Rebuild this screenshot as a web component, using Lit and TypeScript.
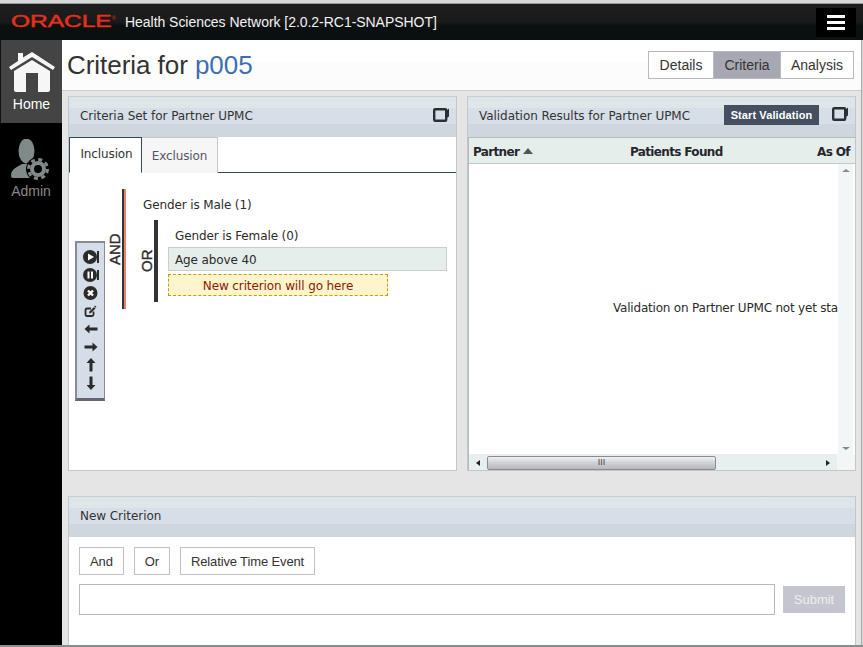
import { LitElement, html, css, svg } from "lit";
import { customElement, state } from "lit/decorators.js";

const windowIcon = html`<svg class="win" width="16" height="14" viewBox="0 0 16 14">
  <rect x="1.200" y="1.200" width="12" height="11.600" rx="1" fill="none" stroke="#2a2f35" stroke-width="2.400" />
  <path d="M13.500 2.500l2.500-2v8l-2.500 1.500z" fill="#2a2f35" />
</svg>`;

const arrow = (d: string) => svg`<path d=${d} fill="#2b2b2b" />`;

const toolIcons = [
  svg`<circle cx="7" cy="7" r="7" fill="#2b2b2b" /><path d="M5 3.500l6 3.500-6 3.500z" fill="#fff" /><path d="M14 1h2v12h-2z" fill="#2b2b2b" />`,
  svg`<circle cx="7" cy="7" r="7" fill="#2b2b2b" /><path d="M4.500 3.500h2v7h-2zM8 3.500h2v7H8z" fill="#fff" /><path d="M14 2h2v10h-2z" fill="#2b2b2b" />`,
  svg`<circle cx="7.500" cy="7" r="7" fill="#2b2b2b" /><path d="M5 4.500l5 5M10 4.500l-5 5" stroke="#fff" stroke-width="2.400" />`,
  svg`<path d="M10.500 7.500v3a1.500 1.500 0 0 1-1.500 1.500H4A1.500 1.500 0 0 1 2.500 10.500V6A1.500 1.500 0 0 1 4 4.500h4" fill="none" stroke="#2b2b2b" stroke-width="1.800" /><path d="M6 9.500l.5-2L11 3l1.500 1.500L8 9z" fill="#2b2b2b" /><path d="M12 1.500l1.500 1.500-.8.8-1.500-1.500z" fill="#2b2b2b" />`,
  arrow("M1.500 7l5-4.500V5.500h8v3h-8V11.500z"),
  arrow("M14.500 7l-5-4.500V5.500h-8v3h8V11.500z"),
  arrow("M8 0l4.500 5H9.500v8.500h-3V5H3.500z"),
  arrow("M8 14l4.500-5H9.500V.5h-3V9H3.500z"),
];

@customElement("app-root")
export class AppRoot extends LitElement {
  @state() view = "Criteria";
  @state() tab = "Inclusion";

  static styles = css`
    :host {
      display: block;
      width: 863px;
      height: 647px;
      overflow: hidden;
      background: #fff;
      font-family: "DejaVu Sans", sans-serif;
      font-size: 12px;
      letter-spacing: -0.05px;
      color: #333;
    }

    .shell {
      display: flex;
      flex-direction: column;
      height: 645px;
      border-bottom: 2px solid #87908f;
      background: #d8d8d8;
    }

    .topbar {
      display: flex;
      align-items: center;
      height: 36px;
      flex: none;
      border-top: 1px solid #999;
      margin-top: 3px;
      padding: 0 7px 0 11px;
      background: linear-gradient(#1e1e1e 0, #1a1a1a 50%, #0a1010 60%, #0a0f0f 100%);
    }

    .logo {
      display: flex;
      width: 114px;
      flex: none;
      color: #e2301c;
    }

    .logo span {
      font: 400 17px/20px "Liberation Sans", sans-serif;
      letter-spacing: 0;
      -webkit-text-stroke: 0.5px #e2301c;
      transform: scaleX(1.44);
      transform-origin: left center;
    }

    .logo small {
      font: 5px/8px "Liberation Sans", sans-serif;
      margin-left: 31px;
      margin-top: 2px;
      align-self: flex-start;
    }

    .product {
      flex: 1;
      font: 14px "Liberation Sans", sans-serif;
      letter-spacing: -0.04px;
      color: #f2f2f2;
    }

    .burger {
      display: flex;
      flex-direction: column;
      justify-content: center;
      gap: 3px;
      width: 40px;
      height: 29px;
      padding: 0 11px;
      box-sizing: border-box;
      background: #000;
    }

    .burger i {
      display: block;
      height: 3px;
      background: #fff;
    }

    .body {
      display: flex;
      flex: 1;
      min-height: 0;
    }

    .side {
      width: 62px;
      flex: none;
      background: #000;
      font: 14px "Liberation Sans", sans-serif;
      letter-spacing: 0;
      text-align: center;
    }

    .side .item {
      display: flex;
      flex-direction: column;
      align-items: center;
    }

    .side .home {
      height: 83px;
      background: #444;
      color: #fff;
      padding-top: 12px;
      box-sizing: border-box;
      border-left: 1px solid #111;
    }

    .side .home span {
      margin-top: 4px;
    }

    .side .admin {
      color: #888;
      padding-top: 16px;
    }

    .side .admin span {
      margin-top: 3px;
    }

    .main {
      flex: 1;
      min-width: 0;
      display: flex;
      flex-direction: column;
      background: #e5e5e5;
      margin-right: 1px;
      border-right: 1px solid #aaa;
    }

    .titlebar {
      display: flex;
      align-items: center;
      justify-content: space-between;
      height: 51px;
      flex: none;
      box-sizing: border-box;
      background: linear-gradient(#fff 44%, #fcfcfc 44%);
      border-bottom: 1px solid #ccc;
      padding: 0 7px 0 5px;
    }

    h1 {
      margin: 0;
      font: 400 26px "Liberation Sans", sans-serif;
      letter-spacing: -0.05px;
      color: #333;
    }

    h1 em {
      font-style: normal;
      color: #3b6eb5;
    }

    .views {
      display: flex;
      border: 1px solid #b8b8c0;
      font: 14px "Liberation Sans", sans-serif;
      letter-spacing: 0;
    }

    .views button {
      height: 26px;
      border: 0;
      padding: 0;
      background: #fff;
      color: #333;
      font: inherit;
    }

    .views button + button {
      border-left: 1px solid #b8b8c0;
    }

    .views button.on {
      background: #a8a8b2;
    }

    .panels {
      display: grid;
      grid-template-columns: 389px 389px;
      gap: 10px;
      padding: 5px 0 0 6px;
      height: 375px;
      flex: none;
    }

    .panel {
      position: relative;
      display: flex;
      flex-direction: column;
      min-width: 0;
      background: #fff;
      box-sizing: border-box;
      border: 1px solid #c4c4cc;
      border-top-color: #c8ccd4;
    }

    .phead {
      display: flex;
      align-items: center;
      justify-content: space-between;
      flex: none;
      height: 40px;
      box-sizing: border-box;
      padding: 0 7px 3px 11px;
      color: #333;
      background: linear-gradient(
        #dce6ea 0, #dfe6e8 11px, #d6dee8 11px, #d6dee8 27px, #ced6de 27px
      );
    }

    .phead .win {
      margin-top: -2px;
    }

    .phead .right {
      display: flex;
      align-items: center;
      gap: 13px;
      margin-top: -1px;
    }

    .start {
      width: 95px;
      height: 20px;
      padding: 0;
      border: 0;
      background: #454f60;
      color: #fff;
      font: 700 11px "Liberation Sans", sans-serif;
      letter-spacing: 0.1px;
    }

    .tabs {
      display: flex;
      height: 36px;
      flex: none;
      box-sizing: border-box;
      border-bottom: 1px solid #2f4c5c;
      letter-spacing: -0.12px;
    }

    .tabs button {
      padding: 0;
      font: inherit;
      letter-spacing: inherit;
      width: 76px;
      height: 36px;
      background: #f6f6f6;
      color: #555566;
      border: 1px solid #c4c8cc;
      border-bottom: 0;
      border-left: 0;
      box-sizing: border-box;
    }

    .tabs button.on {
      width: 73px;
      height: 36px;
      padding: 0 0 3px 2px;
      background: #fff;
      color: #333;
      border: 1px solid #2f4c5c;
      border-bottom: 1px solid #fff;
    }

    .tree {
      padding: 16px 9px 0 38px;
      color: #2b2b2b;
      letter-spacing: -0.12px;
    }

    .group {
      display: flex;
    }

    .op {
      writing-mode: vertical-rl;
      transform: rotate(180deg);
      text-align: center;
      width: 15px;
      flex: none;
      font: 15px/15px "Liberation Sans", sans-serif;
      letter-spacing: 0;
      -webkit-text-stroke: 0.4px #333;
    }

    .members {
      flex: 1;
      min-width: 0;
    }

    .and > .members {
      border-left: 2px solid #333;
      padding: 6px 0 7px 19px;
      box-shadow: inset 2px 0 0 #f07f6c;
    }

    .or {
      margin: 7px 0 0 -4px;
    }

    .or > .members {
      border-left: 4px solid #333;
      padding: 6px 0 6px 10px;
    }

    .leaf {
      height: 18px;
      line-height: 20px;
    }

    .or .leaf {
      padding-left: 7px;
    }

    .or .selected {
      height: 24px;
      line-height: 24px;
      margin-top: 3px;
      padding-left: 6px;
      box-sizing: border-box;
      background: #e6eeec;
      border: 1px solid #ccc;
    }

    .slot {
      width: 220px;
      height: 22px;
      margin-top: 3px;
      box-sizing: border-box;
      line-height: 22px;
      text-align: center;
      color: #8b1a00;
      background: #fff5cc;
      border: 1px dashed #c99a10;
    }

    .tools {
      position: absolute;
      left: 6px;
      top: 144px;
      display: flex;
      flex-direction: column;
      align-items: center;
      gap: 2px;
      width: 30px;
      height: 160px;
      padding-top: 6px;
      box-sizing: border-box;
      background: #d5dde8;
      border: 2px solid #8a8a95;
      border-right-width: 1px;
      border-bottom-width: 3px;
      border-bottom-color: #666672;
    }

    .table {
      flex: 1;
      min-height: 0;
      display: flex;
      flex-direction: column;
      border-top: 1px solid #b4bcc0;
      border-left: 1px solid #b4bcc0;
    }

    .cols {
      display: grid;
      grid-template-columns: 157px 187px 1fr;
      height: 26px;
      padding-top: 2px;
      flex: none;
      box-sizing: border-box;
      align-items: center;
      background: #e6eeec;
      border-bottom: 1px solid #c4c8cc;
      font-weight: 700;
      color: #26262e;
      font-size: 12px;
      letter-spacing: -0.65px;
    }

    .cols span {
      padding-left: 4px;
      white-space: nowrap;
      overflow: hidden;
    }

    .sort {
      display: inline-block;
      margin-left: 4px;
      border: 5px solid transparent;
      border-top: 0;
      border-bottom: 6px solid #555;
      vertical-align: 2px;
    }

    .grid {
      flex: 1;
      min-height: 0;
      display: flex;
    }

    .msg {
      flex: 1;
      min-width: 0;
      display: flex;
      align-items: center;
      padding: 0 0 2px 144px;
      box-sizing: border-box;
      white-space: nowrap;
      overflow: hidden;
      letter-spacing: -0.2px;
      color: #2b2b2b;
      border-bottom: 1px solid #eee;
    }

    .vbar {
      width: 15px;
      flex: none;
      margin-right: 2px;
      display: flex;
      flex-direction: column;
      justify-content: space-between;
      align-items: center;
      padding: 5px 0;
      box-sizing: border-box;
      background: #f2f6f6;
    }

    .up, .down {
      border: 3px solid transparent;
      border-left-width: 4px;
      border-right-width: 4px;
    }

    .up {
      border-top: 0;
      border-bottom-color: #888;
    }

    .down {
      border-bottom: 0;
      border-top-color: #888;
    }

    .hbar {
      display: flex;
      align-items: center;
      height: 15px;
      flex: none;
      background: #e8f0ef;
    }

    .cap {
      width: 18px;
      flex: none;
      display: flex;
      justify-content: center;
    }

    .left, .rt {
      border: 4px solid transparent;
      border-top-width: 3.500px;
      border-bottom-width: 3.500px;
    }

    .left {
      border-left: 0;
      border-right-color: #222;
    }

    .rt {
      border-right: 0;
      border-left-color: #222;
    }

    .thumb {
      width: 229px;
      height: 14px;
      box-sizing: border-box;
      border: 1px solid #8c8c8c;
      border-radius: 2px;
      background: linear-gradient(#eef2f0, #d0d0d4 50%, #b8b8bc);
      font: 9px/11px "Liberation Sans", sans-serif;
      text-align: center;
      color: #444;
    }

    .track {
      flex: 1;
    }

    .corner {
      width: 18px;
      height: 15px;
      flex: none;
      background: #f4f6f6;
    }

    .composer {
      margin: 25px 0 0 6px;
      width: 788px;
      flex: 1;
      border-bottom: 0;
    }

    .form {
      padding: 10px 10px 0 10px;
      font: 13px "Liberation Sans", sans-serif;
      letter-spacing: 0;
    }

    .actions {
      display: flex;
      gap: 10px;
    }

    .actions button {
      height: 28px;
      padding: 0 10px;
      background: #fff;
      border: 1px solid #c0c0c8;
      color: #333;
      font: inherit;
      letter-spacing: -0.13px;
    }

    .entry {
      display: flex;
      align-items: center;
      gap: 8px;
      margin-top: 9px;
    }

    .entry input {
      flex: none;
      width: 696px;
      height: 31px;
      box-sizing: border-box;
      border: 1px solid #b8b8b8;
      padding: 0 6px;
    }

    .entry button {
      width: 62px;
      height: 27px;
      padding: 0;
      border: 0;
      background: #c5c5cf;
      color: #eee;
      font: inherit;
    }
  `;

  views = [
    { name: "Details", width: 64 },
    { name: "Criteria", width: 67 },
    { name: "Analysis", width: 73 },
  ];

  render() {
    return html`
      <div class="shell">
        <header class="topbar">
          <div class="logo"><span>ORACLE</span><small>®</small></div>
          <div class="product">Health Sciences Network [2.0.2-RC1-SNAPSHOT]</div>
          <div class="burger"><i></i><i></i><i></i></div>
        </header>
        <div class="body">
          <nav class="side">
            <div class="item home">
              <svg width="46" height="40" viewBox="0 0 46 40">
                <path d="M0 15L9 9V1h5v4.500L23 0l23 15-2 3L23 5 2 18z" fill="#f6f6f6" />
                <path d="M5 19L23 8l18 11v19a2 2 0 0 1-2 2H29V21H17v19H7a2 2 0 0 1-2-2z" fill="#f6f6f6" />
              </svg>
              <span>Home</span>
            </div>
            <div class="item admin">
              <svg width="40" height="41" viewBox="0 0 40 41">
                <ellipse cx="15.500" cy="12" rx="8" ry="12.500" fill="#808a88" />
                <path d="M0 37c0-8 7-9 11-12h9c3 2 6 3 8 6v8H2a2 2 0 0 1-2-2z" fill="#808a88" />
                <circle cx="27" cy="30" r="12" fill="#000" />
                <circle cx="27" cy="30" r="6" fill="none" stroke="#808a88" stroke-width="4" />
                <circle cx="27" cy="30" r="9.500" fill="none" stroke="#808a88" stroke-width="3" stroke-dasharray="3.960 3.500" />
              </svg>
              <span>Admin</span>
            </div>
          </nav>
          <main class="main">
            <div class="titlebar">
              <h1>Criteria for <em>p005</em></h1>
              <div class="views">
                ${this.views.map(
                  (v) => html`<button
                    class=${v.name === this.view ? "on" : ""}
                    style="width:${v.width}px"
                    @click=${() => (this.view = v.name)}
                  >${v.name}</button>`
                )}
              </div>
            </div>
            <div class="panels">
              <section class="panel">
                <div class="phead"><span>Criteria Set for Partner UPMC</span>${windowIcon}</div>
                <div class="tabs">
                  ${["Inclusion", "Exclusion"].map(
                    (t) => html`<button
                      class=${t === this.tab ? "on" : ""}
                      @click=${() => (this.tab = t)}
                    >${t}</button>`
                  )}
                </div>
                <div class="tree">
                  <div class="group and">
                    <div class="op">AND</div>
                    <div class="members">
                      <div class="leaf">Gender is Male (1)</div>
                      <div class="group or">
                        <div class="op">OR</div>
                        <div class="members">
                          <div class="leaf">Gender is Female (0)</div>
                          <div class="leaf selected">Age above 40</div>
                          <div class="slot">New criterion will go here</div>
                        </div>
                      </div>
                    </div>
                  </div>
                </div>
                <div class="tools">
                  ${toolIcons.map(
                    (icon) => html`<svg width="16" height="16" viewBox="0 0 16 14">${icon}</svg>`
                  )}
                </div>
              </section>
              <section class="panel">
                <div class="phead">
                  <span>Validation Results for Partner UPMC</span>
                  <div class="right">
                    <button class="start">Start Validation</button>
                    ${windowIcon}
                  </div>
                </div>
                <div class="table">
                  <div class="cols">
                    <span>Partner<i class="sort"></i></span>
                    <span>Patients Found</span>
                    <span>As Of</span>
                  </div>
                  <div class="grid">
                    <div class="msg">Validation on Partner UPMC not yet started</div>
                    <div class="vbar"><i class="up"></i><i class="down"></i></div>
                  </div>
                  <div class="hbar">
                    <div class="cap"><i class="left"></i></div>
                    <div class="thumb">III</div>
                    <div class="track"></div>
                    <div class="cap"><i class="rt"></i></div>
                    <div class="corner"></div>
                  </div>
                </div>
              </section>
            </div>
            <section class="panel composer">
              <div class="phead"><span>New Criterion</span></div>
              <div class="form">
                <div class="actions">
                  <button>And</button>
                  <button>Or</button>
                  <button>Relative Time Event</button>
                </div>
                <div class="entry">
                  <input type="text" />
                  <button disabled>Submit</button>
                </div>
              </div>
            </section>
          </main>
        </div>
      </div>
    `;
  }
}
